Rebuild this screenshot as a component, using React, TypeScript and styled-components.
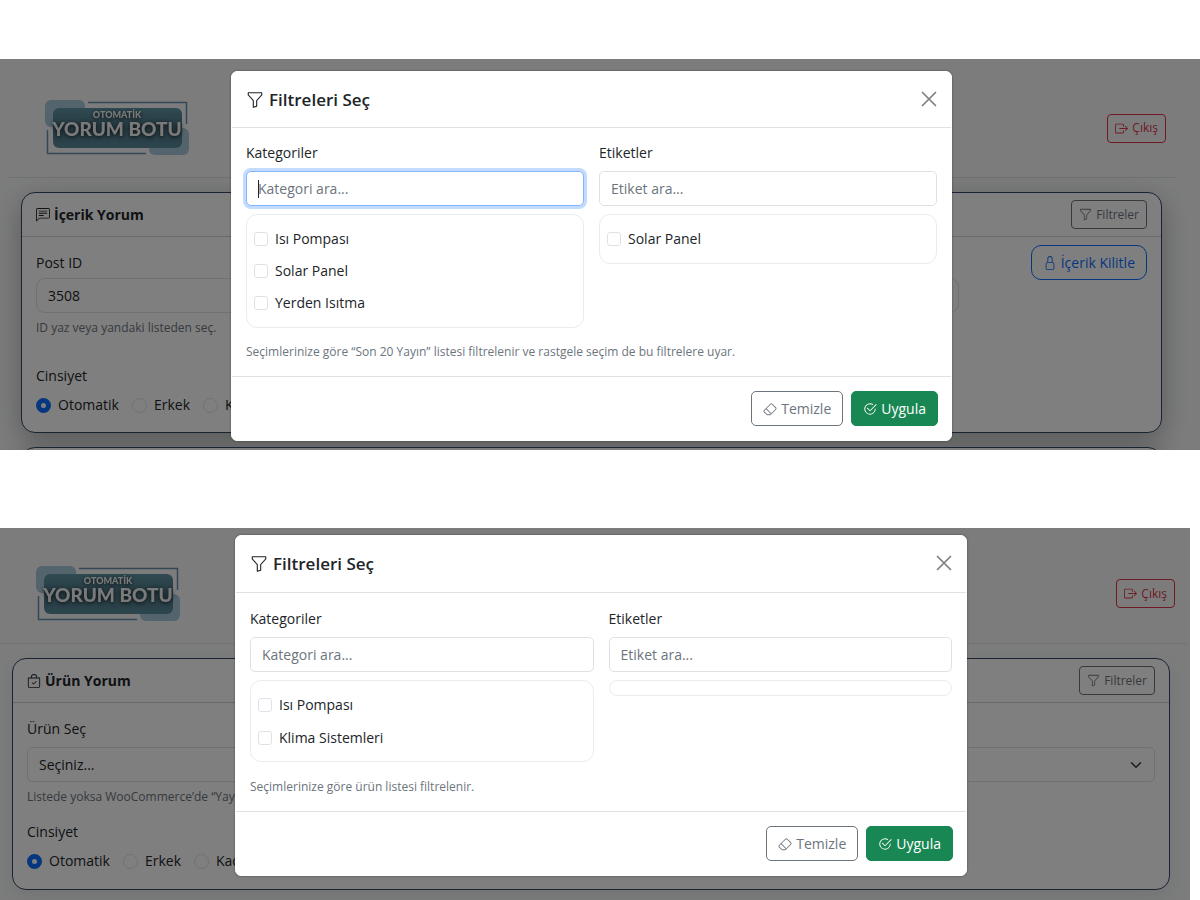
import React from "react";
import styled, { createGlobalStyle, css } from "styled-components";
import {
  BsBagCheck,
  BsBoxArrowRight,
  BsChatLeftText,
  BsCheck2Circle,
  BsEraser,
  BsFunnel,
  BsLock,
} from "react-icons/bs";

const GlobalStyle = createGlobalStyle`
  *, *::before, *::after { box-sizing: border-box; }
  body {
    margin: 0;
    background: #fff;
    color: #212529;
    font-family: "Open Sans", "Noto Sans", sans-serif;
    font-size: 14px;
    line-height: 22px;
  }
  button, input, select { font: inherit; color: inherit; }
`;

const Board = styled.main`
  display: flex;
  flex-direction: column;
  gap: 78px;
  padding-top: 59px;
`;

const Scene = styled.section<{ $clip?: boolean }>`
  position: relative;
  overflow: hidden;
  background: #f8f9fa;
  ${(p) =>
    p.$clip
      ? css`max-height: 391px;`
      : css`margin-right: 10px; padding-bottom: 11px;`}
`;

const Header = styled.header<{ $wide?: boolean }>`
  display: flex;
  align-items: center;
  justify-content: space-between;
  border-bottom: 1px solid #dee2e6;
  ${(p) =>
    p.$wide
      ? css`margin-right: 4px; padding: 32px 11px 16px 36px; height: 116px;`
      : css`margin: 0 23px 0 7px; padding: 36px 11px 16px 38px; height: 119px;`}
`;

const LogoArt = styled.svg`
  display: block;
  width: 146px;
  height: 58px;
`;

const Button = styled.button<{ $tone: "red" | "gray" | "blue" | "green"; $size?: "sm" | "md"; $round?: boolean }>`
  display: inline-flex;
  align-items: center;
  justify-content: center;
  gap: 4px;
  height: ${(p) => (p.$size === "sm" ? 29 : 35)}px;
  padding: 0 ${(p) => (p.$size === "sm" ? 7 : 11)}px;
  border: 1px solid;
  border-radius: ${(p) => (p.$round ? 10 : p.$size === "sm" ? 4 : 5)}px;
  font-size: ${(p) => (p.$size === "sm" ? 12 : 14)}px;
  white-space: nowrap;
  background: transparent;
  ${(p) => p.$tone === "red" && css`color: #dc3545;`}
  ${(p) => p.$tone === "gray" && css`color: #6c757d;`}
  ${(p) => p.$tone === "blue" && css`color: #0d6efd;`}
  ${(p) => p.$tone === "green" && css`color: #fff; background: #198754; border-color: #198754; font-weight: 500;`}
`;

const Card = styled.article<{ $wide?: boolean }>`
  margin: ${(p) => (p.$wide ? "14px 20px 0 12px" : "14px 38px 0 21px")};
  border: 1px solid #334766;
  border-radius: 14px;
  background: #fff;
  box-shadow: ${(p) => (p.$wide ? "0 6px 20px rgba(0, 0, 0, 0.08)" : "0 8px 28px rgba(0, 0, 0, 0.28)")};
`;

const CardHeader = styled.div`
  display: flex;
  align-items: center;
  justify-content: space-between;
  height: 44px;
  padding: 0 14px;
  border-bottom: 1px solid #d0d3d6;
`;

const CardTitle = styled.h2`
  display: flex;
  align-items: center;
  gap: 4px;
  margin: 0;
  font-size: 14px;
  font-weight: 700;
`;

const CardBody = styled.div<{ $tight?: boolean }>`
  display: grid;
  grid-template-columns: repeat(12, minmax(0, 1fr));
  column-gap: 15px;
  padding: ${(p) => (p.$tight ? "15px 14px 17px" : "8px 14px 16px")};
`;

const Cell = styled.div<{ $span: number; $end?: boolean; $top?: number }>`
  grid-column: span ${(p) => p.$span};
  display: flex;
  flex-direction: column;
  align-items: ${(p) => (p.$end ? "flex-end" : "stretch")};
  padding-top: ${(p) => p.$top ?? 0}px;
`;

const Label = styled.label<{ $near?: boolean }>`
  margin-bottom: ${(p) => (p.$near ? 4 : 7)}px;
`;

const control = css`
  width: 100%;
  height: 35px;
  padding: 0 11px;
  border: 1px solid #dee2e6;
  background-color: #fff;
  outline: none;
`;

const Input = styled.input<{ $active?: boolean; $round?: boolean }>`
  ${control}
  border-radius: ${(p) => (p.$round ? 9 : 5)}px;
  &::placeholder { color: #6c757d; opacity: 1; }
  ${(p) =>
    p.$active &&
    css`
      border-color: #86b7fe;
      box-shadow: 0 0 0 3px #c2dbfe;
      background-image: linear-gradient(#212529, #212529);
      background-size: 1px 18px;
      background-position: 11px center;
      background-repeat: no-repeat;
    `}
`;

const Select = styled.select<{ $round?: boolean }>`
  ${control}
  appearance: none;
  border-radius: ${(p) => (p.$round ? 9 : 5)}px;
`;

const SelectWrap = styled.div`
  position: relative;
`;

const Chevron = styled.svg`
  position: absolute;
  right: 13px;
  top: 12px;
  width: 12px;
  height: 12px;
  pointer-events: none;
`;

const Hint = styled.p<{ $top?: number }>`
  margin: ${(p) => p.$top ?? 5}px 0 0;
  font-size: 12px;
  line-height: 20px;
  white-space: nowrap;
  color: #6c757d;
`;

const Choices = styled.fieldset<{ $top: number }>`
  grid-column: 1 / -1;
  display: flex;
  flex-wrap: wrap;
  gap: 13px;
  margin: ${(p) => p.$top}px 0 0;
  padding: 0;
  border: 0;
`;

const Legend = styled.legend`
  margin-bottom: 7px;
  padding: 0;
`;

const Choice = styled.label`
  display: flex;
  align-items: center;
  gap: 7px;
`;

const Radio = styled.input`
  appearance: none;
  width: 15px;
  height: 15px;
  margin: 0;
  border: 1px solid #dee2e6;
  border-radius: 50%;
  background: #fff;
  &:checked { border: 5px solid #0d6efd; }
`;

const Layer = styled.div<{ $wide?: boolean }>`
  position: absolute;
  inset: 0;
  display: flex;
  align-items: flex-start;
  justify-content: center;
  padding: ${(p) => (p.$wide ? "7px 0 0 12px" : "12px 17px 0 0")};
  background: rgba(0, 0, 0, 0.5);
`;

const Dialog = styled.div<{ $wide?: boolean }>`
  width: 100%;
  max-width: ${(p) => (p.$wide ? 732 : 721)}px;
  border: 1px solid #fff;
  border-radius: 6px;
  background: #fff;
  box-shadow: 0 0 2px rgba(0, 0, 0, 0.5);
`;

const DialogHeader = styled.div<{ $wide?: boolean }>`
  display: flex;
  align-items: center;
  justify-content: space-between;
  height: ${(p) => (p.$wide ? 57 : 56)}px;
  padding: 0 14px;
  border-bottom: 1px solid #dee2e6;
`;

const DialogTitle = styled.h1`
  display: flex;
  align-items: center;
  gap: 5px;
  margin: 0;
  font-size: 17px;
  font-weight: 600;
  line-height: 28px;
`;

const Close = styled.button`
  display: flex;
  padding: 0 0 2px;
  border: 0;
  background: none;
  color: #7f7f7f;
`;

const DialogBody = styled.div<{ $wide?: boolean }>`
  padding: ${(p) => (p.$wide ? 15 : 14)}px 14px 14px;
`;

const Columns = styled.div`
  display: grid;
  grid-template-columns: 1fr 1fr;
  column-gap: 15px;
`;

const Column = styled.div`
  display: flex;
  flex-direction: column;
  align-items: stretch;
`;

const List = styled.ul<{ $wide?: boolean }>`
  margin: 8px 0 0;
  padding: ${(p) => (p.$wide ? 7 : 8)}px 7px;
  border: 1px solid #e9ecef;
  border-radius: 11px;
  list-style: none;
`;

const Item = styled.li<{ $wide?: boolean }>`
  display: flex;
  align-items: center;
  height: ${(p) => (p.$wide ? 33 : 32)}px;
`;

const Check = styled.input`
  appearance: none;
  width: 14px;
  height: 14px;
  margin: 0;
  border: 1px solid #dee2e6;
  border-radius: 3px;
  background: #fff;
`;

const DialogFooter = styled.div`
  display: flex;
  justify-content: flex-end;
  gap: 8px;
  padding: 14px 13px;
  border-top: 1px solid #dee2e6;
`;

function Logo({ id }: { id: string }) {
  return (
    <LogoArt viewBox="0 0 146 58" role="img" aria-label="Otomatik Yorum Botu">
      <defs>
        <linearGradient id={id} x1="0" y1="0" x2="0" y2="1">
          <stop offset="0" stopColor="#5f95a6" />
          <stop offset="0.5" stopColor="#4d7584" />
          <stop offset="1" stopColor="#5a8b9c" />
        </linearGradient>
      </defs>
      <rect x="0" y="1" width="40" height="27" rx="6" fill="#a6c8d8" />
      <rect x="104" y="29" width="40" height="27" rx="6" fill="#a6c8d8" />
      <path d="M43 3.500H141.500V25M2.500 31V54.500H101" fill="none" stroke="#6690a8" strokeWidth="1.500" />
      <rect x="8" y="9" width="129" height="40" rx="6" fill={`url(#${id})`} />
      <g
        fill="#f4f4f4"
        textAnchor="middle"
        fontFamily="Lato, sans-serif"
        fontWeight="900"
        style={{ filter: "drop-shadow(0 1px 2px rgba(0,0,0,.8))" }}
      >
        <text x="72" y="19" fontSize="9">OTOMATİK</text>
        <text x="72" y="37" fontSize="19">YORUM BOTU</text>
      </g>
    </LogoArt>
  );
}

function Gender({ name, top }: { name: string; top: number }) {
  return (
    <Choices $top={top}>
      <Legend>Cinsiyet</Legend>
      {["Otomatik", "Erkek", "Kadın"].map((text, i) => (
        <Choice key={text}>
          <Radio type="radio" name={name} defaultChecked={i === 0} />
          {text}
        </Choice>
      ))}
    </Choices>
  );
}

function CheckList({ items, wide }: { items: string[]; wide?: boolean }) {
  return (
    <List $wide={wide}>
      {items.map((text) => (
        <Item key={text} $wide={wide}>
          <Choice>
            <Check type="checkbox" />
            {text}
          </Choice>
        </Item>
      ))}
    </List>
  );
}

interface FilterProps {
  id: string;
  wide?: boolean;
  active?: boolean;
  categories: string[];
  tags: string[];
  hint: string;
}

function FilterDialog({ id, wide, active, categories, tags, hint }: FilterProps) {
  return (
    <Layer $wide={wide}>
      <Dialog $wide={wide} role="dialog" aria-labelledby={`${id}-title`}>
        <DialogHeader $wide={wide}>
          <DialogTitle id={`${id}-title`}>
            <BsFunnel size={18} />
            Filtreleri Seç
          </DialogTitle>
          <Close type="button" aria-label="Kapat">
            <svg width="16" height="16" viewBox="0 0 16 16" aria-hidden="true">
              <path d="M1.500 1.500l13 13m0-13l-13 13" fill="none" stroke="currentColor" strokeWidth="1.700" strokeLinecap="round" />
            </svg>
          </Close>
        </DialogHeader>
        <DialogBody $wide={wide}>
          <Columns>
            <Column>
              <Label htmlFor={`${id}-cat`}>Kategoriler</Label>
              <Input id={`${id}-cat`} $active={active} placeholder="Kategori ara..." />
              <CheckList items={categories} wide={wide} />
            </Column>
            <Column>
              <Label htmlFor={`${id}-tag`}>Etiketler</Label>
              <Input id={`${id}-tag`} placeholder="Etiket ara..." />
              <CheckList items={tags} wide={wide} />
            </Column>
          </Columns>
          <Hint $top={wide ? 15 : 14}>{hint}</Hint>
        </DialogBody>
        <DialogFooter>
          <Button type="button" $tone="gray">
            <BsEraser size={14} />
            Temizle
          </Button>
          <Button type="button" $tone="green">
            <BsCheck2Circle size={14} />
            Uygula
          </Button>
        </DialogFooter>
      </Dialog>
    </Layer>
  );
}

function PageHeader({ id, wide }: { id: string; wide?: boolean }) {
  return (
    <Header $wide={wide}>
      <Logo id={id} />
      <Button type="button" $tone="red" $size="sm">
        <BsBoxArrowRight size={13} />
        Çıkış
      </Button>
    </Header>
  );
}

function FilterButton() {
  return (
    <Button type="button" $tone="gray" $size="sm">
      <BsFunnel size={13} />
      Filtreler
    </Button>
  );
}

export default function App() {
  return (
    <>
      <GlobalStyle />
      <Board>
        <Scene $clip>
          <PageHeader id="logo-content" />
          <Card>
            <CardHeader>
              <CardTitle>
                <BsChatLeftText size={14} />
                İçerik Yorum
              </CardTitle>
              <FilterButton />
            </CardHeader>
            <CardBody>
              <Cell $span={3} $top={7}>
                <Label $near htmlFor="post-id">Post ID</Label>
                <Input id="post-id" $round defaultValue="3508" />
                <Hint>ID yaz veya yandaki listeden seç.</Hint>
              </Cell>
              <Cell $span={7} $top={7}>
                <Label $near htmlFor="recent">Son 20 Yayın</Label>
                <Select id="recent" $round />
              </Cell>
              <Cell $span={2} $end>
                <Button type="button" $tone="blue" $round>
                  <BsLock size={14} />
                  İçerik Kilitle
                </Button>
              </Cell>
              <Gender name="gender-content" top={27} />
            </CardBody>
          </Card>
          <Card>
            <CardHeader />
          </Card>
          <FilterDialog
            id="content"
            active
            categories={["Isı Pompası", "Solar Panel", "Yerden Isıtma"]}
            tags={["Solar Panel"]}
            hint="Seçimlerinize göre “Son 20 Yayın” listesi filtrelenir ve rastgele seçim de bu filtrelere uyar."
          />
        </Scene>
        <Scene>
          <PageHeader id="logo-product" wide />
          <Card $wide>
            <CardHeader>
              <CardTitle>
                <BsBagCheck size={14} />
                Ürün Yorum
              </CardTitle>
              <FilterButton />
            </CardHeader>
            <CardBody $tight>
              <Cell $span={12}>
                <Label htmlFor="product">Ürün Seç</Label>
                <SelectWrap>
                  <Select id="product">
                    <option>Seçiniz...</option>
                  </Select>
                  <Chevron viewBox="0 0 16 16" aria-hidden="true">
                    <path d="m2 5 6 6 6-6" fill="none" stroke="#343a40" strokeWidth="2" strokeLinecap="round" strokeLinejoin="round" />
                  </Chevron>
                </SelectWrap>
                <Hint>Listede yoksa WooCommerce’de “Yayında” olduğundan emin olun.</Hint>
              </Cell>
              <Gender name="gender-product" top={14} />
            </CardBody>
          </Card>
          <FilterDialog
            id="product-filter"
            wide
            categories={["Isı Pompası", "Klima Sistemleri"]}
            tags={[]}
            hint="Seçimlerinize göre ürün listesi filtrelenir."
          />
        </Scene>
      </Board>
    </>
  );
}
